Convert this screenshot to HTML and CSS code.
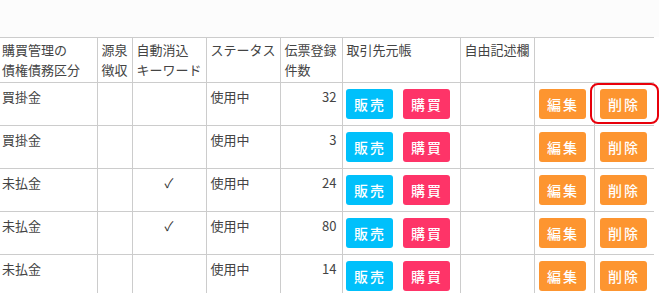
FILE: index.html
```html
<!DOCTYPE html>
<html lang="ja">
<head>
  <meta charset="UTF-8">
  <meta name="viewport" content="width=device-width, initial-scale=1.0">
  <title>債権債務区分</title>
  <link rel="stylesheet" href="styles.css">
</head>
<body>
  <div class="toolbar"></div>

  <table class="kubun-table">
    <colgroup>
      <col class="c-kubun">
      <col class="c-gensen">
      <col class="c-keyword">
      <col class="c-status">
      <col class="c-count">
      <col class="c-ledger">
      <col class="c-memo">
      <col class="c-edit">
      <col class="c-delete">
    </colgroup>
    <thead>
      <tr>
        <th>購買管理の<br>債権債務区分</th>
        <th>源泉<br>徴収</th>
        <th>自動消込<br>キーワード</th>
        <th>ステータス</th>
        <th>伝票登録<br>件数</th>
        <th>取引先元帳</th>
        <th>自由記述欄</th>
        <th colspan="2"></th>
      </tr>
    </thead>
    <tbody>
      <tr>
        <td>買掛金</td>
        <td></td>
        <td class="center"></td>
        <td>使用中</td>
        <td class="num">32</td>
        <td><div class="btn-group"><button class="btn btn-sales">販売</button><button class="btn btn-purchase">購買</button></div></td>
        <td></td>
        <td><button class="btn btn-orange">編集</button></td>
        <td><button class="btn btn-orange focused">削除</button></td>
      </tr>
      <tr>
        <td>買掛金</td>
        <td></td>
        <td class="center"></td>
        <td>使用中</td>
        <td class="num">3</td>
        <td><div class="btn-group"><button class="btn btn-sales">販売</button><button class="btn btn-purchase">購買</button></div></td>
        <td></td>
        <td><button class="btn btn-orange">編集</button></td>
        <td><button class="btn btn-orange">削除</button></td>
      </tr>
      <tr>
        <td>未払金</td>
        <td></td>
        <td class="center">✓</td>
        <td>使用中</td>
        <td class="num">24</td>
        <td><div class="btn-group"><button class="btn btn-sales">販売</button><button class="btn btn-purchase">購買</button></div></td>
        <td></td>
        <td><button class="btn btn-orange">編集</button></td>
        <td><button class="btn btn-orange">削除</button></td>
      </tr>
      <tr>
        <td>未払金</td>
        <td></td>
        <td class="center">✓</td>
        <td>使用中</td>
        <td class="num">80</td>
        <td><div class="btn-group"><button class="btn btn-sales">販売</button><button class="btn btn-purchase">購買</button></div></td>
        <td></td>
        <td><button class="btn btn-orange">編集</button></td>
        <td><button class="btn btn-orange">削除</button></td>
      </tr>
      <tr>
        <td>未払金</td>
        <td></td>
        <td class="center"></td>
        <td>使用中</td>
        <td class="num">14</td>
        <td><div class="btn-group"><button class="btn btn-sales">販売</button><button class="btn btn-purchase">購買</button></div></td>
        <td></td>
        <td><button class="btn btn-orange">編集</button></td>
        <td><button class="btn btn-orange">削除</button></td>
      </tr>
    </tbody>
  </table>
</body>
</html>
```

FILE: styles.css
```css
body {
  margin: 0;
  padding: 0;
  background-color: #fff;
  font-family: "Noto Sans CJK JP", "Open Sans", sans-serif;
  font-size: 13px;
  color: #444;
  overflow: hidden;
}

.toolbar {
  height: 37px;
  background-color: #fcfcfc;
}

.kubun-table {
  width: 654px;
  border-collapse: collapse;
  table-layout: fixed;
}

.c-kubun { width: 97px; }
.c-gensen { width: 35px; }
.c-keyword { width: 74px; }
.c-status { width: 74px; }
.c-count { width: 62px; }
.c-ledger { width: 118px; }
.c-memo { width: 74px; }
.c-edit { width: 60px; }
.c-delete { width: 60px; }

.kubun-table th,
.kubun-table td {
  border: 1px solid #ccc;
  text-align: left;
  vertical-align: top;
  line-height: 20px;
  white-space: nowrap;
}

.kubun-table th:first-child,
.kubun-table td:first-child {
  border-left: none;
}

.kubun-table th:last-child,
.kubun-table td:last-child {
  border-right: none;
}

.kubun-table th {
  font-weight: normal;
  padding: 2px 3px 2px 4px;
}

.kubun-table th:first-child {
  padding-left: 2px;
}

.kubun-table td {
  padding: 4px 4px 6px 4px;
  height: 32px;
}

.kubun-table td:first-child {
  padding-left: 2px;
}

.kubun-table td.num {
  text-align: right;
  padding-right: 5px;
}

.kubun-table td.center {
  text-align: center;
  color: #333;
}

.btn-group {
  display: flex;
  gap: 10px;
  margin-left: -1px;
}

.btn {
  display: inline-block;
  box-sizing: border-box;
  width: 47px;
  height: 30px;
  margin-top: 2px;
  padding: 0 0 0 2px;
  border: none;
  border-radius: 3px;
  color: #fff;
  font-family: "Noto Sans CJK JP", sans-serif;
  font-size: 14px;
  font-weight: 500;
  letter-spacing: 2px;
  line-height: 30px;
  text-align: center;
  cursor: pointer;
}

.btn-sales {
  background-color: #00c0fb;
}

.btn-purchase {
  background-color: #fe3468;
}

.btn-orange {
  background-color: #fd9530;
}

.kubun-table td:last-child .btn {
  margin-left: 1px;
}

.focused {
  position: relative;
}

.focused::after {
  content: "";
  position: absolute;
  top: -6px;
  bottom: -5px;
  left: -10px;
  right: -12px;
  border: 2px solid #e8000b;
  border-radius: 8px;
}
```
